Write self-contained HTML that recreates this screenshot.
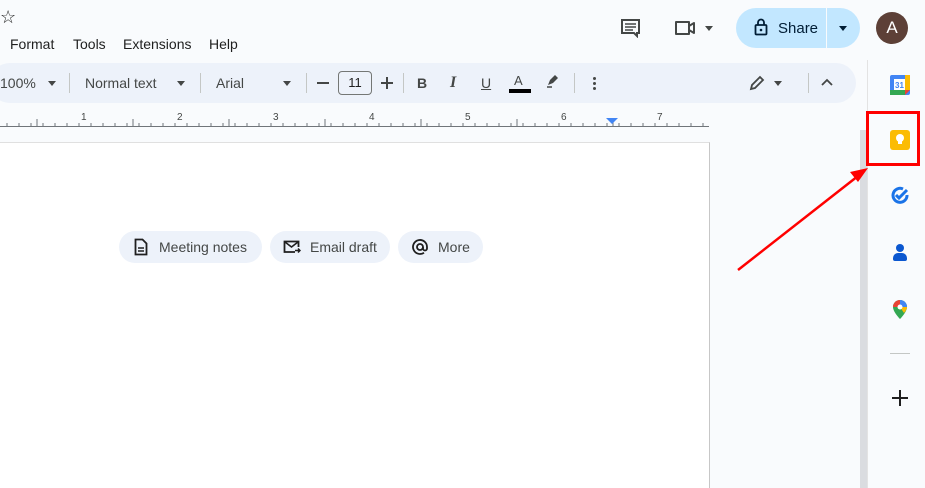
<!DOCTYPE html>
<html><head><meta charset="utf-8"><style>
*{margin:0;padding:0;box-sizing:border-box}
body{width:925px;height:488px;overflow:hidden;background:#f9fbfd;font-family:"Liberation Sans",Arial,sans-serif;color:#1f1f1f;position:relative}
.a{position:absolute}
.menu span{position:absolute;top:36px;font-size:14px;color:#1f1f1f}
.tb{left:-10px;top:63px;width:866px;height:40px;background:#edf2fa;border-radius:20px}
.t{font-size:14px;color:#444746;top:75px}
.sep{width:1px;height:20px;background:#c4c7c5;top:73px}
.caret{width:0;height:0;border-left:4px solid transparent;border-right:4px solid transparent;border-top:5px solid #444746}
.chip{top:231px;height:32px;border-radius:16px;background:#edf2fa;font-size:14px;color:#444746;line-height:32px}
</style></head><body>
<div class="a" style="left:0;top:7px;font-size:18px;color:#1f1f1f">☆</div>
<div class="menu"><span style="left:10px">Format</span><span style="left:73px">Tools</span><span style="left:123px">Extensions</span><span style="left:209px">Help</span></div>

<svg class="a" style="left:620px;top:18px" width="22" height="20" viewBox="0 0 22 20"><path d="M2 2h17v13h-2v3l-3-3H2z" fill="none" stroke="#444746" stroke-width="2"/><path d="M5 6h11M5 9h11M5 12h8" stroke="#444746" stroke-width="1.6"/></svg>
<svg class="a" style="left:674px;top:19px" width="24" height="18" viewBox="0 0 24 18"><path d="M2 3h13v12H2zM15 7l5-3v10l-5-3" fill="none" stroke="#444746" stroke-width="2" stroke-linejoin="round"/></svg>
<div class="a caret" style="left:705px;top:26px"></div>
<div class="a" style="left:736px;top:8px;width:124px;height:40px;border-radius:20px;background:#c2e7ff"></div>
<div class="a" style="left:826px;top:8px;width:1px;height:40px;background:#f9fbfd"></div>
<svg class="a" style="left:754px;top:18px" width="14" height="18" viewBox="0 0 14 18"><rect x="1.5" y="7" width="11" height="9.5" rx="1" fill="none" stroke="#001d35" stroke-width="1.8"/><path d="M4 7V4.5a3 3 0 0 1 6 0V7" fill="none" stroke="#001d35" stroke-width="1.8"/><circle cx="7" cy="12" r="1.3" fill="#001d35"/></svg>
<div class="a" style="left:778px;top:20px;font-size:15px;color:#001d35">Share</div>
<div class="a caret" style="left:839px;top:26px;border-top-color:#001d35"></div>
<div class="a" style="left:876px;top:12px;width:32px;height:32px;border-radius:50%;background:#5d4037;color:#fff;font-size:17px;text-align:center;line-height:32px">A</div>

<div class="a tb"></div>
<div class="a t" style="left:0">100%</div><div class="a caret" style="left:48px;top:81px"></div>
<div class="a sep" style="left:69px"></div>
<div class="a t" style="left:85px">Normal text</div><div class="a caret" style="left:177px;top:81px"></div>
<div class="a sep" style="left:200px"></div>
<div class="a t" style="left:216px">Arial</div><div class="a caret" style="left:283px;top:81px"></div>
<div class="a sep" style="left:306px"></div>
<div class="a" style="left:317px;top:82px;width:12px;height:2px;background:#444746"></div>
<div class="a" style="left:338px;top:71px;width:34px;height:24px;border:1px solid #747775;border-radius:4px;font-size:13px;text-align:center;line-height:22px;color:#1f1f1f">11</div>
<div class="a" style="left:381px;top:82px;width:12px;height:2px;background:#444746"></div>
<div class="a" style="left:386px;top:77px;width:2px;height:12px;background:#444746"></div>
<div class="a sep" style="left:403px"></div>
<div class="a t" style="left:417px;font-weight:bold">B</div>
<div class="a t" style="left:450px;font-style:italic;font-weight:bold;font-family:'Liberation Serif',serif;font-size:16px;top:74px">I</div>
<div class="a t" style="left:481px;text-decoration:underline">U</div>
<div class="a t" style="left:514px;font-size:13px;top:73px">A</div>
<div class="a" style="left:509px;top:89px;width:22px;height:4px;background:#000"></div>
<svg class="a" style="left:545px;top:73px" width="16" height="16" viewBox="0 0 16 16"><path d="M3 12l2-5 5-5 3 3-5 5z" fill="#444746"/><path d="M2 14h5" stroke="#444746" stroke-width="1.5"/></svg>
<div class="a sep" style="left:574px"></div>
<div class="a" style="left:593px;top:77px;width:3px;height:3px;border-radius:50%;background:#444746;box-shadow:0 5px 0 #444746,0 10px 0 #444746"></div>
<svg class="a" style="left:748px;top:74px" width="18" height="18" viewBox="0 0 18 18"><path d="M3 15l1-4 8-8 3 3-8 8z" fill="none" stroke="#444746" stroke-width="1.8"/></svg>
<div class="a caret" style="left:774px;top:81px"></div>
<div class="a sep" style="left:808px"></div>
<svg class="a" style="left:821px;top:78px" width="12" height="8" viewBox="0 0 12 8"><path d="M1 7l5-5 5 5" fill="none" stroke="#444746" stroke-width="1.8"/></svg>

<svg class="a" style="left:0;top:105px" width="860" height="24">
<line x1="0" y1="21.5" x2="709" y2="21.5" stroke="#70757a"/>
<g stroke="#70757a">
<path d="M7 18v4M19 18v4M31 18v4M43 18v4M55 18v4M67 18v4M79 18v4M91 18v4M103 18v4M115 18v4M127 18v4M139 18v4M151 18v4M163 18v4M175 18v4M187 18v4M199 18v4M211 18v4M223 18v4M235 18v4M247 18v4M259 18v4M271 18v4M283 18v4M295 18v4M307 18v4M319 18v4M331 18v4M343 18v4M355 18v4M367 18v4M379 18v4M391 18v4M403 18v4M415 18v4M427 18v4M439 18v4M451 18v4M463 18v4M475 18v4M487 18v4M499 18v4M511 18v4M523 18v4M535 18v4M547 18v4M559 18v4M571 18v4M583 18v4M595 18v4M607 18v4M619 18v4M631 18v4M643 18v4M655 18v4M667 18v4M679 18v4M691 18v4M703 18v4"/>
<path d="M37 14v8M133 14v8M229 14v8M325 14v8M421 14v8M517 14v8M613 14v8"/>
</g>
<g font-size="10" fill="#444746" font-family="Liberation Sans">
<text x="81" y="15">1</text><text x="177" y="15">2</text><text x="273" y="15">3</text><text x="369" y="15">4</text><text x="465" y="15">5</text><text x="561" y="15">6</text><text x="657" y="15">7</text>
</g>
<path d="M606 13h12l-6 6z" fill="#4285f4"/>
</svg>

<div class="a" style="left:0;top:142px;width:710px;height:346px;background:#fff;border-right:1px solid #c7c7c7;border-top:1px solid #e0e0e0"></div>
<div class="a" style="left:860px;top:130px;width:7px;height:358px;background:#dadce0"></div>
<div class="a" style="left:867px;top:60px;width:1px;height:428px;background:#e3e3e3"></div>

<div class="a chip" style="left:119px;width:143px;padding-left:40px">Meeting notes</div>
<svg class="a" style="left:134px;top:238px" width="14" height="18" viewBox="0 0 14 18"><path d="M1.5 1.5h7l4 4v11h-11z" fill="none" stroke="#1f1f1f" stroke-width="1.8"/><path d="M4 10h6M4 13h6" stroke="#1f1f1f" stroke-width="1.5"/></svg>
<div class="a chip" style="left:270px;width:120px;padding-left:40px">Email draft</div>
<svg class="a" style="left:283px;top:240px" width="18" height="14" viewBox="0 0 18 14"><path d="M12 12H1.5V1.5h14V7" fill="none" stroke="#1f1f1f" stroke-width="1.8"/><path d="M2 2l6.5 5L15 2" fill="none" stroke="#1f1f1f" stroke-width="1.6"/><path d="M12 10.5h5M15 8.5l2 2-2 2" fill="none" stroke="#1f1f1f" stroke-width="1.5"/></svg>
<div class="a chip" style="left:398px;width:85px;padding-left:40px">More</div>
<svg class="a" style="left:411px;top:238px" width="18" height="18" viewBox="0 0 18 18"><circle cx="9" cy="9" r="3" fill="none" stroke="#1f1f1f" stroke-width="1.8"/><path d="M12 9v1.5a2 2 0 0 0 4 0V9a7 7 0 1 0-3 5.7" fill="none" stroke="#1f1f1f" stroke-width="1.8"/></svg>

<svg class="a" style="left:890px;top:75px" width="20" height="20" viewBox="0 0 20 20"><rect x="0" y="0" width="20" height="20" rx="2" fill="#4285f4"/><rect x="0" y="15" width="15" height="5" fill="#34a853"/><rect x="15" y="0" width="5" height="15" fill="#fbbc04"/><path d="M15 15h5l-5 5z" fill="#ea4335"/><rect x="4" y="4" width="11" height="11" fill="#fff"/><text x="5" y="13" font-size="8" fill="#4285f4" font-family="Liberation Sans" font-weight="bold">31</text></svg>
<div class="a" style="left:866px;top:111px;width:54px;height:55px;border:3px solid #f00"></div>
<div class="a" style="left:890px;top:130px;width:20px;height:20px;border-radius:3px;background:#fbbc04"></div>
<div class="a" style="left:896px;top:134px;width:8px;height:8px;border-radius:50%;background:#fff"></div>
<div class="a" style="left:898px;top:141px;width:4px;height:3px;background:#fff"></div>
<svg class="a" style="left:890px;top:186px" width="20" height="20" viewBox="0 0 20 20"><path d="M17 9a7 7 0 1 1-4-6" fill="none" stroke="#1a73e8" stroke-width="3"/><path d="M6 9l3 3 8-8" fill="none" stroke="#1a73e8" stroke-width="3"/></svg>
<div class="a" style="left:896px;top:244px;width:8px;height:8px;border-radius:50%;background:#0b57d0"></div>
<div class="a" style="left:893px;top:253px;width:14px;height:8px;border-radius:5px 5px 2px 2px;background:#0b57d0"></div>
<svg class="a" style="left:892px;top:299px" width="16" height="21" viewBox="0 0 16 21"><path d="M8 1a7 7 0 0 0-7 7c0 5 7 12 7 12s7-7 7-12a7 7 0 0 0-7-7z" fill="#34a853"/><path d="M8 1a7 7 0 0 1 7 7L8 8z" fill="#4285f4"/><path d="M1 8a7 7 0 0 1 7-7V8z" fill="#ea4335"/><path d="M15 8c0 2-2 5-3 6L8 8z" fill="#fbbc04"/><circle cx="8" cy="8" r="2.5" fill="#fff"/></svg>
<div class="a" style="left:890px;top:353px;width:20px;height:1px;background:#c4c7c5"></div>
<div class="a" style="left:892px;top:397px;width:16px;height:2px;background:#1f1f1f"></div>
<div class="a" style="left:899px;top:390px;width:2px;height:16px;background:#1f1f1f"></div>

<svg class="a" style="left:730px;top:160px" width="145" height="115" viewBox="0 0 145 115"><path d="M8 110L128 16" stroke="#f00" stroke-width="2.5"/><path d="M138 8l-18 4 8 10z" fill="#f00"/></svg>
</body></html>
